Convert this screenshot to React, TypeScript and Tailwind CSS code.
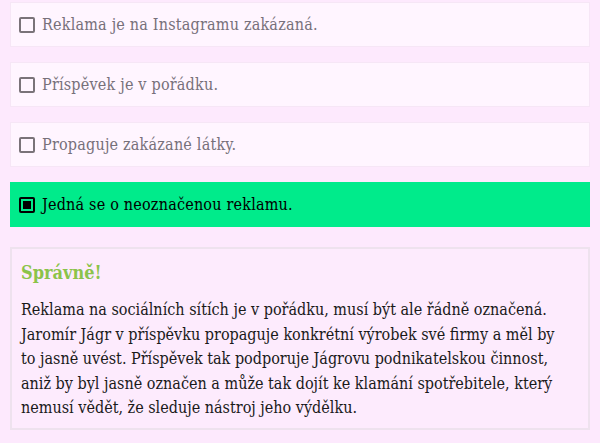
import React from "react";

const options = [
  { text: "Reklama je na Instagramu zakázaná.", selected: false },
  { text: "Příspěvek je v pořádku.", selected: false },
  { text: "Propaguje zakázané látky.", selected: false },
  { text: "Jedná se o neoznačenou reklamu.", selected: true },
];

const lines = [
  "Reklama na sociálních sítích je v pořádku, musí být ale řádně označená.",
  "Jaromír Jágr v příspěvku propaguje konkrétní výrobek své firmy a měl by",
  "to jasně uvést. Příspěvek tak podporuje Jágrovu podnikatelskou činnost,",
  "aniž by byl jasně označen a může tak dojít ke klamání spotřebitele, který",
  "nemusí vědět, že sleduje nástroj jeho výdělku.",
];

function Checkbox({ checked }: { checked: boolean }) {
  if (checked) {
    return (
      <span className="flex h-[16px] w-[16px] shrink-0 items-center justify-center rounded-[2px] border-2 border-black">
        <span className="h-[8px] w-[8px] bg-black" />
      </span>
    );
  }
  return <span className="h-[16px] w-[16px] shrink-0 rounded-[2px] border-2 border-[#7a7379]" />;
}

export default function App() {
  return (
    <div
      className="min-h-[443px] w-[600px] bg-[#fde9fd] px-[10px] pt-[2px]"
      style={{ fontFamily: '"DejaVu Serif Condensed", "DejaVu Serif", serif' }}
    >
      <div className="flex flex-col gap-[15px]">
        {options.map((o) => (
          <div
            key={o.text}
            className={
              o.selected
                ? "flex h-[45px] items-center gap-[7px] bg-[#00eb8b] pl-[9px] text-[16px] tracking-[0.2px] text-black"
                : "flex h-[45px] items-center gap-[7px] border border-[#f6e6f6] bg-[#fff5ff] pl-[8px] text-[16px] tracking-[0.2px] text-[#77707a]"
            }
          >
            <Checkbox checked={o.selected} />
            <span>{o.text}</span>
          </div>
        ))}
      </div>
      <div className="mt-[20px] border-2 border-[#eee2ee] bg-[#fdebfd] px-[9px] pb-[7px] pt-[10px]">
        <div className="text-[18px] font-bold text-[#8bc34a]">Správně!</div>
        <p className="mt-[12px] whitespace-nowrap text-[16px] leading-[24.5px] text-[#1a1a1a]">
          {lines.map((l, i) => (
            <React.Fragment key={i}>
              {l}
              {i < lines.length - 1 && <br />}
            </React.Fragment>
          ))}
        </p>
      </div>
    </div>
  );
}
